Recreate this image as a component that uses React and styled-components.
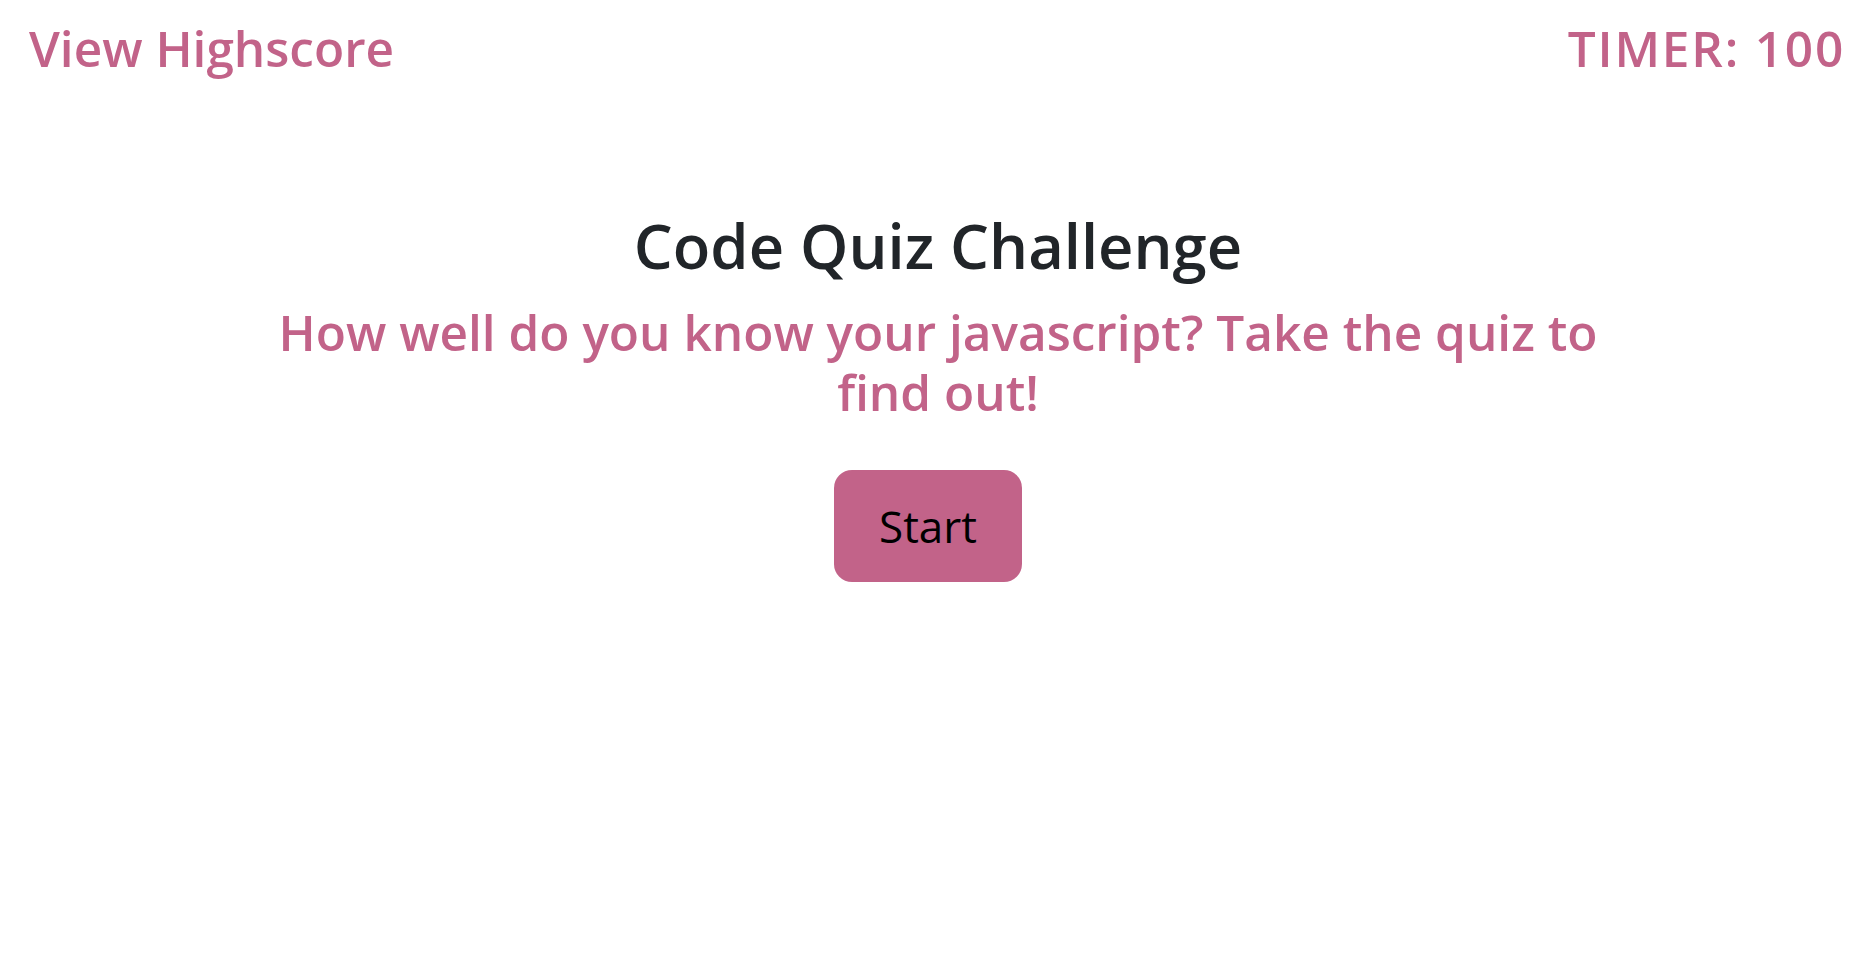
import React from 'react';
import styled, { createGlobalStyle } from 'styled-components';

const GlobalStyle = createGlobalStyle`
  * {
    box-sizing: border-box;
  }

  body {
    margin: 0;
    background: #ffffff;
    font-family: "Open Sans", "Liberation Sans", sans-serif;
  }
`;

const Header = styled.header`
  display: flex;
  justify-content: space-between;
  align-items: center;
  padding: 8px 31px 0 29px;
`;

const HeaderText = styled.div`
  font-size: 49.5px;
  font-weight: 600;
  line-height: 80px;
  letter-spacing: ${(props) => props.$spacing || '0'};
  color: #c26389;
  cursor: ${(props) => (props.$link ? 'pointer' : 'default')};
`;

const Main = styled.main`
  display: flex;
  flex-direction: column;
  align-items: center;
  padding-top: 112px;
`;

const Title = styled.h1`
  margin: 0;
  font-size: 61.5px;
  font-weight: 600;
  line-height: 90px;
  color: #212529;
`;

const Subtitle = styled.p`
  margin: 12px 0 0;
  max-width: 1360px;
  text-align: center;
  font-size: 49.5px;
  font-weight: 600;
  line-height: 60px;
  color: #c26389;
`;

const StartButton = styled.button`
  margin: 48px 20px 0 0;
  width: 188px;
  height: 112px;
  border: none;
  border-radius: 18px;
  background-color: #c26389;
  color: #000000;
  font-family: inherit;
  font-size: 44px;
  cursor: pointer;
`;

export default function App() {
  return (
    <>
      <GlobalStyle />
      <Header>
        <HeaderText $link>View Highscore</HeaderText>
        <HeaderText $spacing="1.8px">TIMER: 100</HeaderText>
      </Header>
      <Main>
        <Title>Code Quiz Challenge</Title>
        <Subtitle>How well do you know your javascript? Take the quiz to find out!</Subtitle>
        <StartButton>Start</StartButton>
      </Main>
    </>
  );
}
